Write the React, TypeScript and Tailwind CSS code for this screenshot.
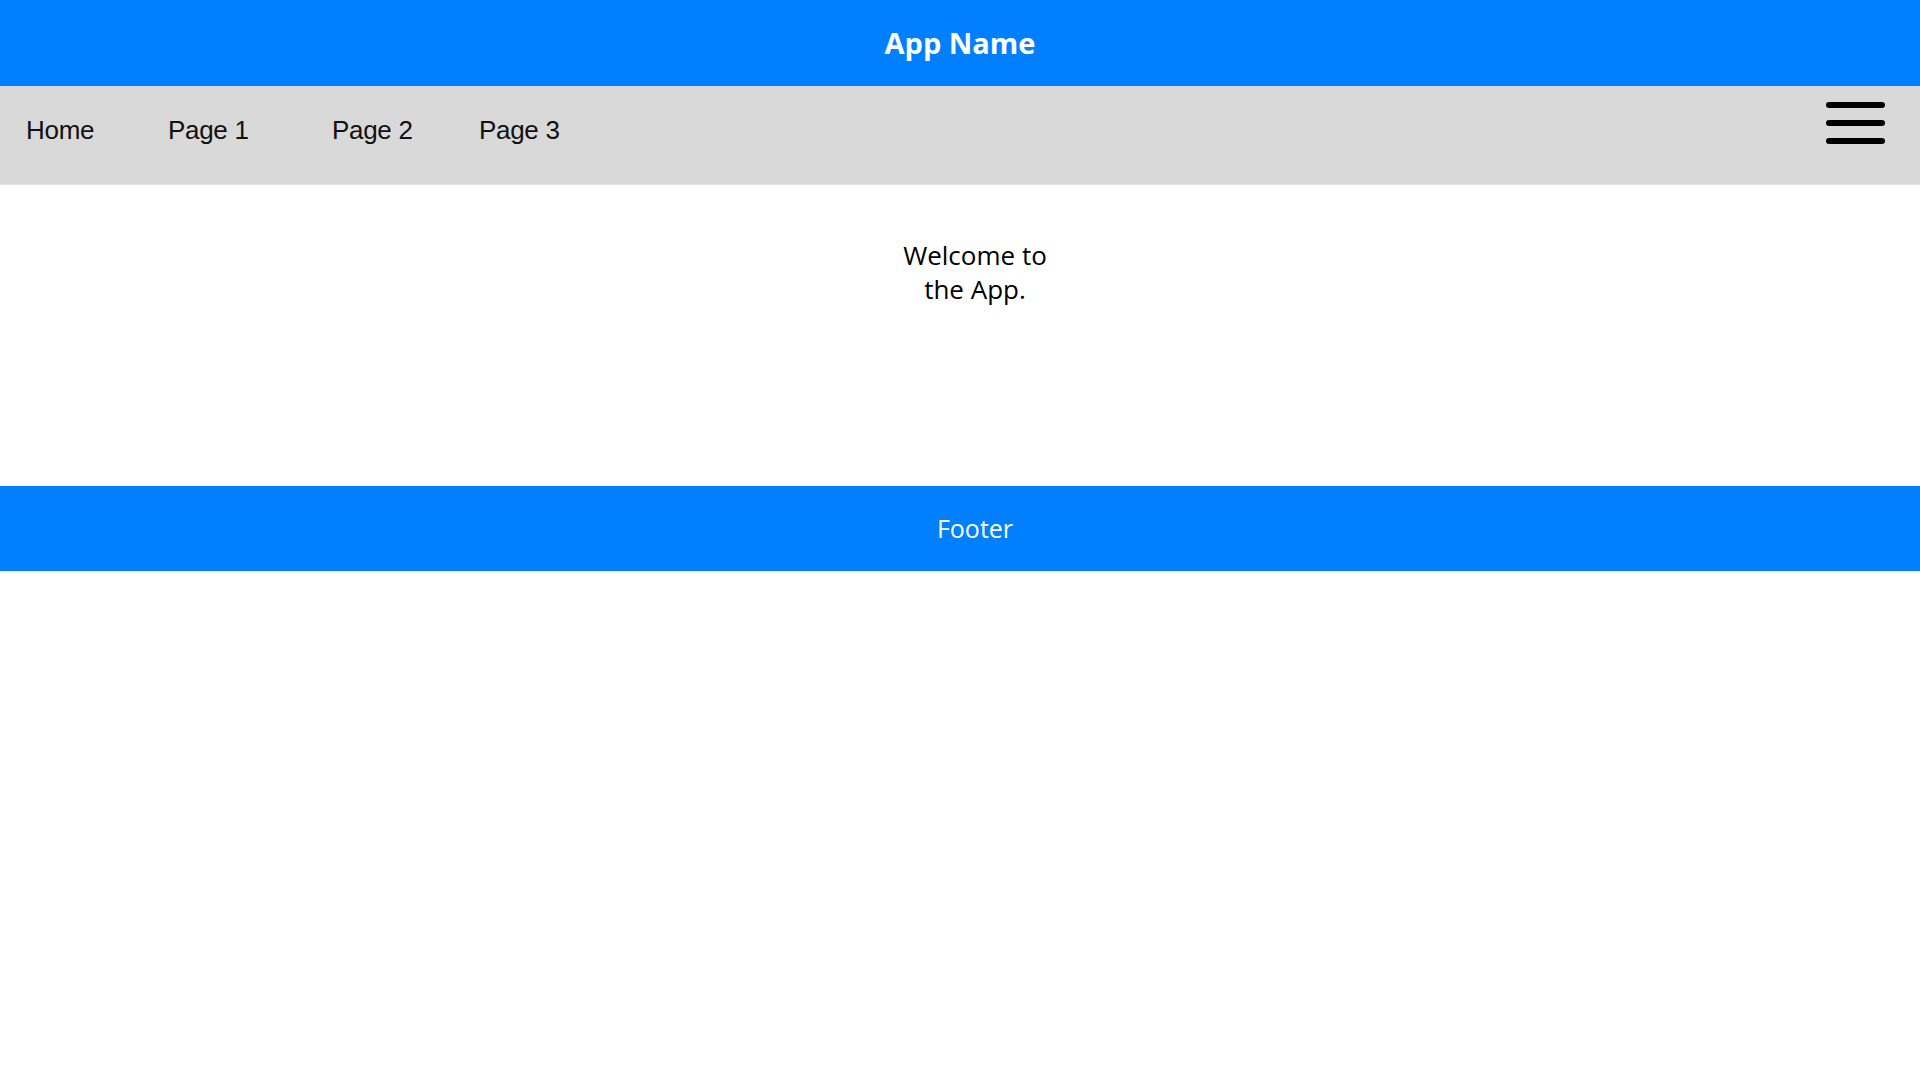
export default function App() {
  return (
    <div className="w-[1920px] h-[1080px] bg-white">
      <header className="h-[86px] bg-[#0080ff] flex items-center justify-center">
        <h1 className="text-white font-bold text-[29px] leading-none font-['Open_Sans',sans-serif] pb-[1px]">App Name</h1>
      </header>
      <nav className="h-[99px] bg-[#d9d9d9] flex items-start border-b border-[#e4e4e4]">
        <ul className="flex items-start pt-[29px] pl-[26px] text-[26px] leading-[30px] text-[#111] font-['Liberation_Sans',Arial,sans-serif] tracking-[-0.3px]">
          <li className="w-[142px]">Home</li>
          <li className="w-[164px]">Page 1</li>
          <li className="w-[147px]">Page 2</li>
          <li>Page 3</li>
        </ul>
        <button className="ml-auto mr-[35px] mt-[16px] flex flex-col gap-[12px] w-[59px]" aria-label="menu">
          <span className="block h-[6px] w-[59px] rounded-full bg-black" />
          <span className="block h-[6px] w-[59px] rounded-full bg-black" />
          <span className="block h-[6px] w-[59px] rounded-full bg-black" />
        </button>
      </nav>
      <main className="h-[301px] flex justify-center pl-[30px] pt-[53px]">
        <p className="text-center text-[26px] leading-[34px] text-black font-['Open_Sans',sans-serif]">
          Welcome to
          <br />
          the App.
        </p>
      </main>
      <footer className="h-[85px] bg-[#0080ff] flex items-center justify-center pl-[30px]">
        <span className="text-white text-[25px] font-['Open_Sans',sans-serif]">Footer</span>
      </footer>
    </div>
  );
}
